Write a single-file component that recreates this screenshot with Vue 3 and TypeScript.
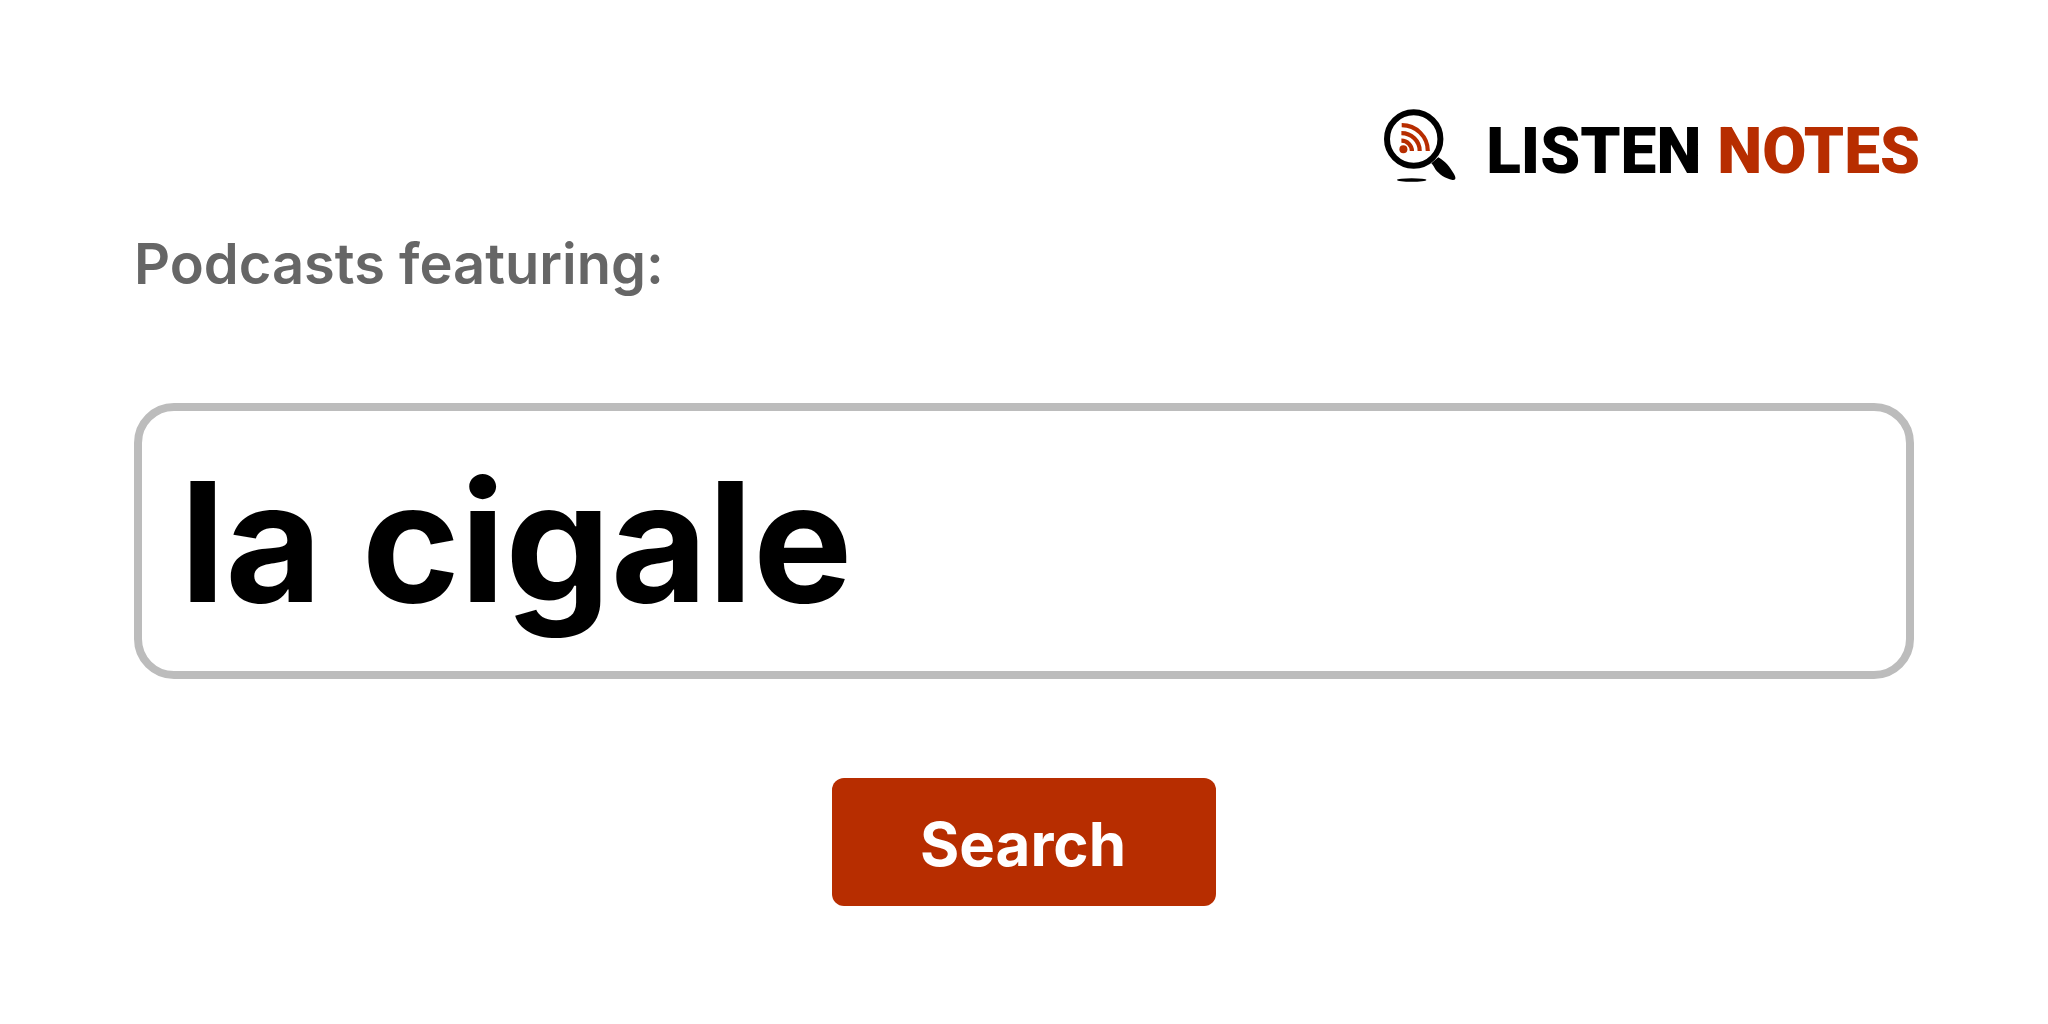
<script setup lang="ts">
import { ref } from 'vue'

const query = ref<string>('la cigale')
</script>

<template>
  <main class="page">
    <header class="brand">
      <a class="logo" href="#" aria-label="Listen Notes">
        <svg class="mark" viewBox="0 0 72 74" aria-hidden="true">
          <circle cx="29.7" cy="30" r="26.7" fill="none" stroke="#000" stroke-width="6" />
          <path
            d="M47.3 54.3 L54.3 48.3 C61 52 66 58 70 65 C72.3 69 71.8 71.5 68.5 71 C61 69.5 55 65 51.5 60.5 C50 58 49.5 56.5 47.3 54.3 Z"
          />
          <ellipse cx="27.7" cy="71" rx="14.7" ry="1.7" />
          <g fill="none" stroke="#b72d00" stroke-width="4.2">
            <path d="M17.7 16.1 A26 25.8 0 0 1 43.8 41.9" />
            <path d="M17.4 24.1 A18.2 17.8 0 0 1 35.7 41.9" />
            <path d="M17.4 31.7 A10.4 10.2 0 0 1 27.9 41.9" />
          </g>
          <circle cx="19.4" cy="40.3" r="4" fill="#b72d00" />
        </svg>
        <span class="wordmark">LISTEN <span class="accent">NOTES</span></span>
      </a>
    </header>

    <form class="search" @submit.prevent>
      <label class="caption" for="query">Podcasts featuring:</label>
      <input id="query" v-model="query" class="field" type="text" autocomplete="off" />
      <button class="submit" type="submit">Search</button>
    </form>
  </main>
</template>

<style>
body {
  margin: 0;
  background: #fff;
}
</style>

<style scoped>
.page {
  box-sizing: border-box;
  padding: 109px 128px 118px;
  font-family: Inter, 'Liberation Sans', sans-serif;
}

.brand {
  display: flex;
  justify-content: flex-end;
}

.logo {
  display: flex;
  align-items: flex-start;
  gap: 30px;
  color: #000;
  text-decoration: none;
}

.mark {
  display: block;
  width: 72px;
  height: 74px;
}

.wordmark {
  font-family: Roboto, 'Liberation Sans', sans-serif;
  font-size: 64px;
  font-weight: 900;
  line-height: 86px;
  white-space: nowrap;
}

.accent {
  color: #b72d00;
}

.search {
  display: flex;
  flex-direction: column;
  padding: 0 6px;
}

.caption {
  margin: 31px 0 101px;
  color: #666;
  font-size: 56px;
  font-weight: 600;
  line-height: 76px;
}

.field {
  box-sizing: border-box;
  width: 100%;
  height: 276px;
  padding: 0 38px;
  border: 8px solid #bcbcbc;
  border-radius: 40px;
  outline: none;
  background: #fff;
  color: #000;
  font-family: inherit;
  font-size: 167px;
  font-weight: 700;
}

.submit {
  align-self: center;
  width: 384px;
  height: 128px;
  margin-top: 99px;
  padding: 4px 2px 0 0;
  border: 0;
  border-radius: 12px;
  background: #b72d00;
  color: #fff;
  font-family: inherit;
  font-size: 60px;
  font-weight: 700;
}
</style>
